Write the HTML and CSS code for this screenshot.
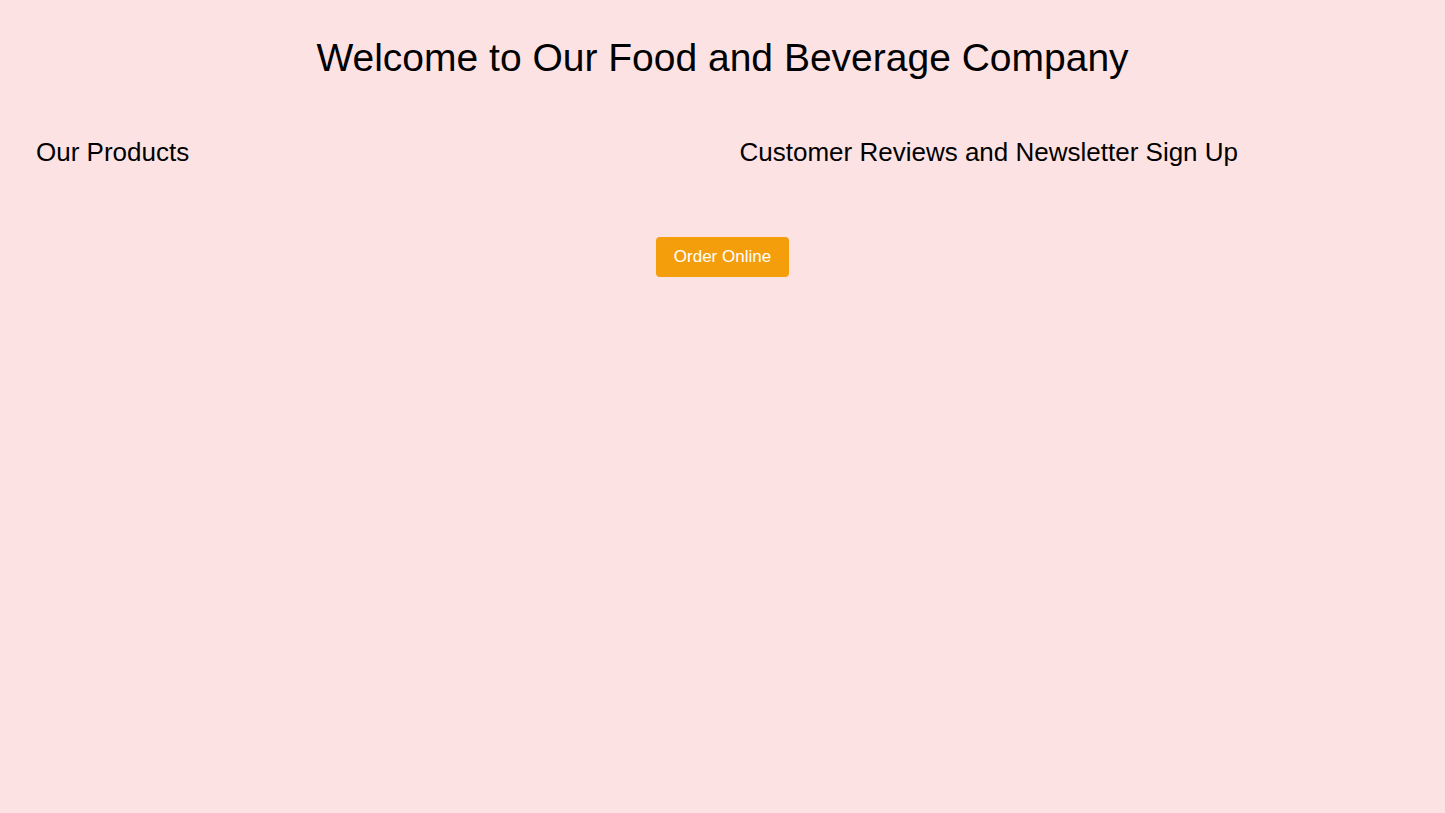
FILE: index.html
```html
<!DOCTYPE html>
<html lang="en">
<head>
    <meta charset="UTF-8">
    <meta name="viewport" content="width=device-width, initial-scale=1.0">
    <title>Food and Beverage Company</title>
    <link rel="stylesheet" href="styles.css">
</head>
<body>
    <header class="header">
        <h1>Welcome to Our Food and Beverage Company</h1>
    </header>

    <!-- Two sections side by side -->
    <main class="sections">
        <section class="section">
            <h2>Our Products</h2>
        </section>
        <section class="section">
            <h2>Customer Reviews and Newsletter Sign Up</h2>
        </section>
    </main>

    <div class="actions">
        <button class="order-btn">Order Online</button>
    </div>
</body>
</html>
```
FILE: styles.css
```css
body {
    margin: 0;
    min-height: 100vh;
    background-color: #fde2e4;
    font-family: "Liberation Sans", Arial, sans-serif;
    color: #000;
}
h1, h2 {
    margin: 0;
    font-weight: normal;
}
.header {
    padding: 38px 32px 0;
    text-align: center;
}
.header h1 {
    font-size: 39px;
    line-height: 40px;
}
.sections {
    display: grid;
    grid-template-columns: 1fr 1fr;
    gap: 26px;
    padding: 58px 32px 0;
}
.section {
    padding-left: 4px;
}
.section h2 {
    font-size: 26px;
    line-height: 32px;
}
.actions {
    text-align: center;
    padding-top: 69px;
}
.order-btn {
    background-color: #f59e0b;
    color: #fff;
    border: none;
    border-radius: 4px;
    padding: 8px 18px;
    font-size: 17px;
    line-height: 24px;
    font-family: inherit;
}
```
